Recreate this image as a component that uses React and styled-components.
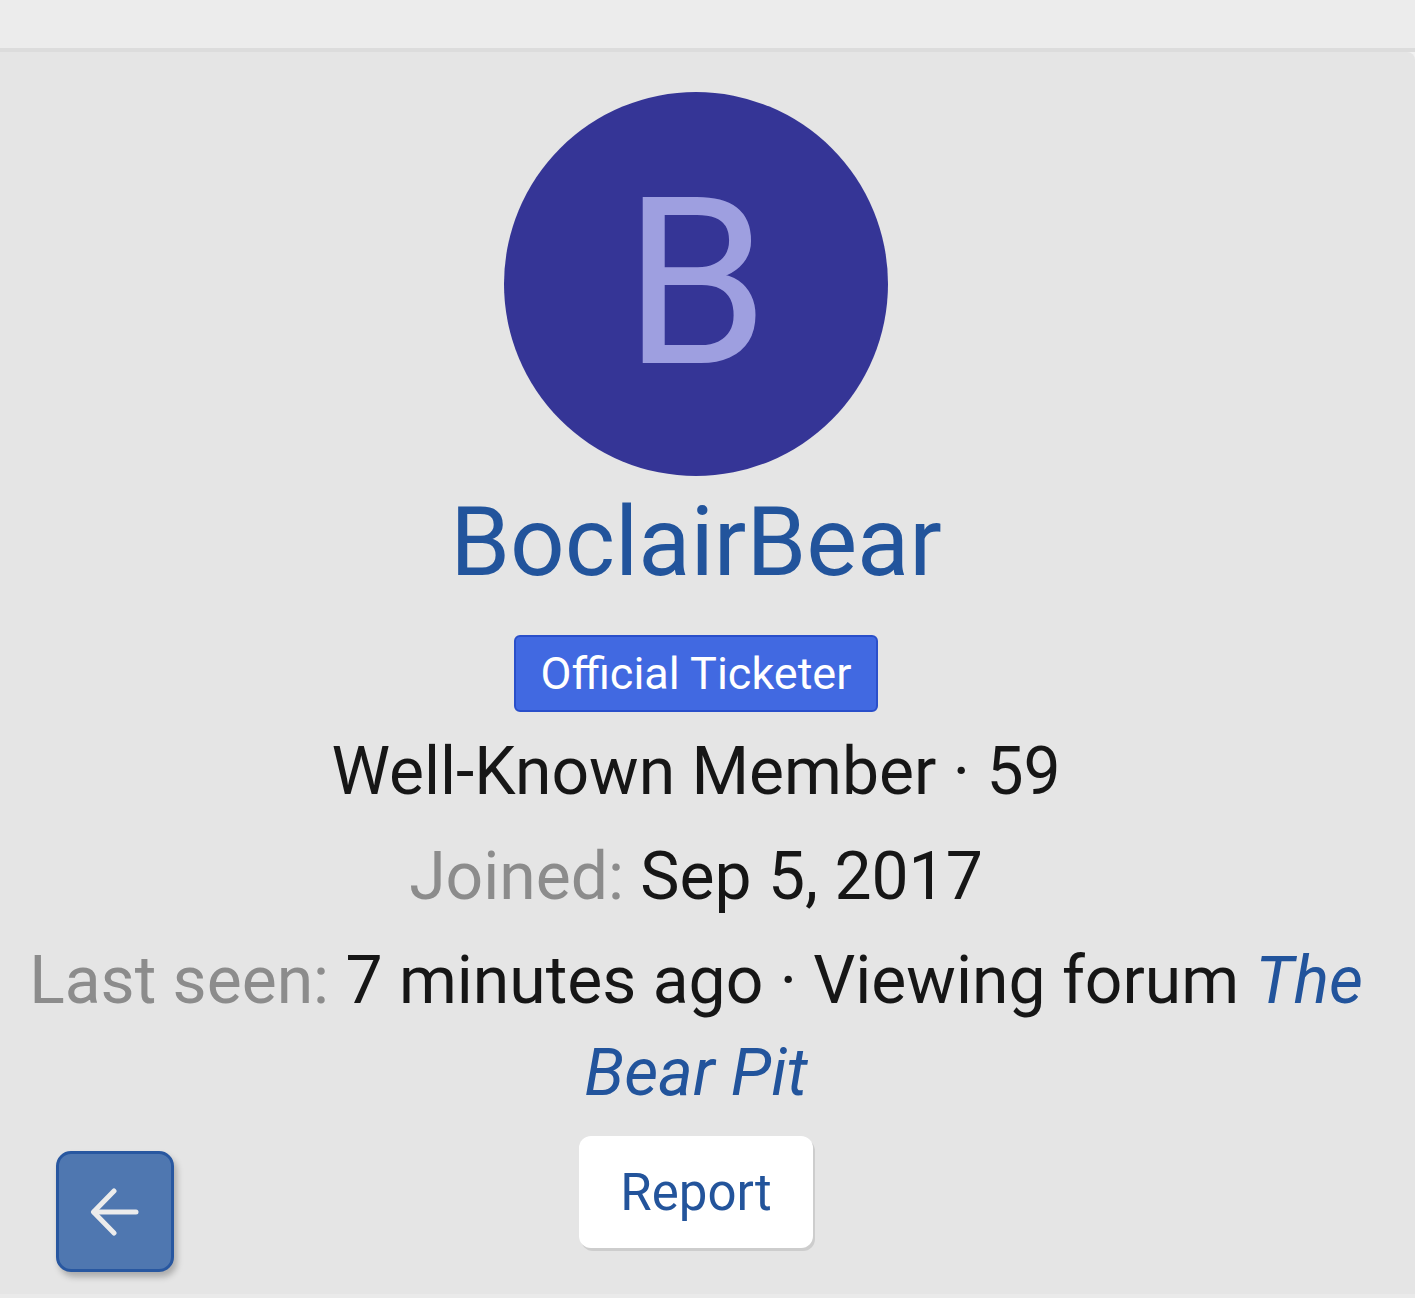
import React from "react"
import styled, { createGlobalStyle } from "styled-components"

const Global = createGlobalStyle`
  html, body {
    margin: 0;
    padding: 0;
    background: #f2f2f2;
    font-family: Roboto, "Liberation Sans", sans-serif;
  }
`

const App = () => {
    return (
        <Page>
            <Global />
            <TopBar />
            <Panel>
                <Content>
                    <Avatar>B</Avatar>
                    <UserName>BoclairBear</UserName>
                    <Badge>Official Ticketer</Badge>
                    <InfoLine gap={14}>Well-Known Member · 59</InfoLine>
                    <InfoLine gap={13}>
                        <Label>Joined:</Label> Sep 5, 2017
                    </InfoLine>
                    <InfoLine gap={12}>
                        <Label>Last seen:</Label> 7 minutes ago · Viewing forum <ForumLink>The Bear Pit</ForumLink>
                    </InfoLine>
                    <ReportButton>Report</ReportButton>
                </Content>
                <BackButton aria-label="Back">
                    <svg width="50" height="48" viewBox="0 0 50 48" fill="none" stroke="#ececec" strokeWidth="5" strokeLinecap="round" strokeLinejoin="round">
                        <path d="M46 24H4" />
                        <path d="M24 3 3.5 24 24 45" />
                    </svg>
                </BackButton>
            </Panel>
            <BottomStrip />
        </Page>
    )
}

export default App;

const Page = styled.div`
width: 1415px;
height: 1298px;
display: flex;
flex-direction: column;
overflow: hidden;
`;

const TopBar = styled.div`
height: 48px;
background-color: #ececec;
border-bottom: 4px solid #dcdcdc;
flex-shrink: 0;
`;

const Panel = styled.div`
position: relative;
height: 1242px;
flex-shrink: 0;
background-color: #e5e5e5;
border-top-right-radius: 8px;
`;

const Content = styled.div`
width: 1392px;
padding-top: 40px;
display: flex;
flex-direction: column;
align-items: center;
text-align: center;
`;

const Avatar = styled.div`
width: 384px;
height: 384px;
border-radius: 50%;
background-color: #353596;
color: #9e9fe0;
font-size: 233px;
line-height: 384px;
display: flex;
justify-content: center;
align-items: center;
`;

const UserName = styled.div`
margin-top: 9px;
font-size: 96px;
line-height: 114px;
color: #22549c;
`;

const Badge = styled.div`
margin-top: 36px;
height: 73px;
line-height: 73px;
padding: 0 25px;
border: 2.5px solid #2a4fca;
border-radius: 6px;
background-color: #4169e1;
color: #ffffff;
font-size: 45px;
`;

const InfoLine = styled.div`
margin-top: ${(props) => props.gap}px;
max-width: 1340px;
font-size: 66px;
line-height: 92px;
color: #161616;
`;

const Label = styled.span`
color: #8c8c8c;
`;

const ForumLink = styled.span`
color: #22549c;
font-style: italic;
`;

const ReportButton = styled.button`
margin-top: 17px;
width: 234px;
height: 112px;
border: none;
border-radius: 12px;
background-color: #ffffff;
box-shadow: 2px 3px 0 #cdcdcd;
color: #23549b;
font-family: Roboto, "Liberation Sans", sans-serif;
font-size: 51px;
cursor: pointer;
`;

const BackButton = styled.button`
position: absolute;
left: 56px;
top: 1099px;
width: 118px;
height: 121px;
border: 3px solid #2857a0;
border-radius: 15px;
background-color: #4f77b0;
box-shadow: 3px 5px 6px rgba(0, 0, 0, 0.25);
display: flex;
justify-content: center;
align-items: center;
padding: 0;
cursor: pointer;
`;

const BottomStrip = styled.div`
height: 4px;
background-color: #eaeaea;
flex-shrink: 0;
`;
